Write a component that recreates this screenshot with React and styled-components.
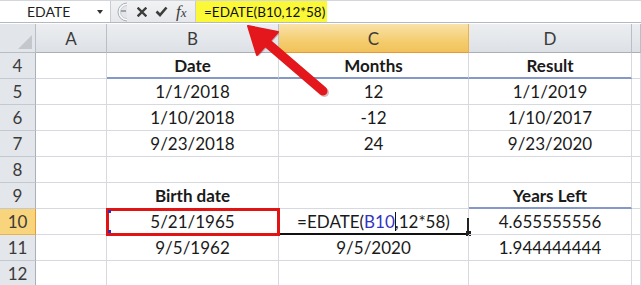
import React from "react";
import styled, { createGlobalStyle, css } from "styled-components";

const GlobalStyle = createGlobalStyle`
  html, body {
    margin: 0;
    padding: 0;
    background: #ffffff;
    overflow: hidden;
  }
  body {
    font-family: Lato, "Open Sans", sans-serif;
  }
`;

const Frame = styled.div`
  position: relative;
  width: 641px;
  height: 285px;
  overflow: hidden;
  background: #ffffff;
`;

const FormulaBar = styled.div`
  display: flex;
  height: 23px;
  border-top: 1px solid #d3d6da;
  border-bottom: 1px solid #b4b9c0;
  box-sizing: border-box;
  background: #ffffff;
`;

const NameBox = styled.div`
  width: 111px;
  display: flex;
  align-items: center;
  justify-content: space-between;
  padding: 0 7px 0 27px;
  box-sizing: border-box;
  font-size: 14px;
  color: #1e1e1e;
  border-right: 1px solid #c9cdd2;
`;

const DropArrow = styled.span`
  width: 0;
  height: 0;
  border-left: 3px solid transparent;
  border-right: 3px solid transparent;
  border-top: 4px solid #333;
`;

const ButtonStrip = styled.div`
  width: 85px;
  display: flex;
  align-items: center;
  padding-left: 1px;
  box-sizing: border-box;
  background: linear-gradient(#f1f2f4, #e6e8eb);
  border-right: 1px solid #c9cdd2;
`;

const StripIcon = styled.svg`
  flex: none;
  margin-left: ${(p) => p.$gap}px;
`;

const FxLabel = styled.span`
  margin-left: 8px;
  font-family: "Liberation Serif", serif;
  font-style: italic;
  font-size: 17px;
  color: #3a3a3a;
  line-height: 1;
`;

const FxSub = styled.span`
  font-size: 13px;
`;

const FormulaInput = styled.div`
  flex: 1;
  display: flex;
  align-items: stretch;
`;

const Highlight = styled.span`
  display: flex;
  align-items: center;
  padding: 0 0 0 8px;
  background: #fbf937;
  font-size: 13.5px;
  color: #111;
  width: 131px;
  box-sizing: border-box;
  white-space: nowrap;
`;

const Sheet = styled.div`
  display: grid;
  grid-template-columns: 36px 71px 172px 190px 163px 9px;
  grid-template-rows: 29px repeat(9, 26px);
  border-top: 1px solid #ffffff;
`;

const headFace = css`
  display: flex;
  align-items: center;
  justify-content: center;
  box-sizing: border-box;
  font-size: 17px;
  color: #3b3b3b;
`;

const Corner = styled.div`
  ${headFace};
  position: relative;
  background: #e2e5e9;
  border-right: 1px solid #b8bec6;
  border-bottom: 1px solid #b8bec6;
`;

const CornerMark = styled.svg`
  position: absolute;
  right: 3px;
  bottom: 3px;
`;

const ColHead = styled.div`
  ${headFace};
  background: ${(p) =>
    p.active
      ? "linear-gradient(#f9e2a9, #f4cd6f 60%, #f1c25a)"
      : "linear-gradient(#eceef1, #dde1e6)"};
  border-right: 1px solid ${(p) => (p.active ? "#e8b24e" : "#b9bfc7")};
  border-bottom: 1px solid ${(p) => (p.active ? "#e59a35" : "#a9b0ba")};
`;

const RowHead = styled.div`
  ${headFace};
  background: ${(p) => (p.active ? "#f8d47c" : "#e3e6ea")};
  border-right: 1px solid ${(p) => (p.active ? "#e59a35" : "#a9b0ba")};
  border-bottom: 1px solid ${(p) => (p.active ? "#e8b24e" : "#c4c9d0")};
`;

const Cell = styled.div`
  position: relative;
  display: flex;
  align-items: center;
  justify-content: center;
  box-sizing: border-box;
  font-size: 17px;
  font-weight: ${(p) => (p.bold ? 700 : 400)};
  color: #1a1a1a;
  white-space: nowrap;
  border-right: 1px solid #d6dae0;
  border-bottom: ${(p) =>
    p.blueLine ? "2px solid #8598c6" : p.active ? "2px solid #111" : "1px solid #d6dae0"};
  ${(p) =>
    p.marked &&
    css`
      outline: 3px solid #e11414;
      outline-offset: -2px;
      z-index: 2;
    `}
  ${(p) =>
    p.active &&
    css`
      &::after {
        content: "";
        position: absolute;
        right: -1px;
        top: 9px;
        bottom: -2px;
        width: 2px;
        background: #222;
      }
      &::before {
        content: "";
        position: absolute;
        right: -3px;
        bottom: -3px;
        width: 5px;
        height: 5px;
        background: #222;
      }
    `}
`;

const RefText = styled.span`
  color: #3434c2;
`;

const Caret = styled.span`
  display: inline-block;
  width: 1px;
  height: 19px;
  background: #111;
  vertical-align: middle;
  margin: 0 -1px 0 0;
`;

const RefCorner = styled.span`
  position: absolute;
  left: 1px;
  width: 3px;
  height: 3px;
  background: #2d2dbd;
  top: ${(p) => (p.bottom ? "auto" : "1px")};
  bottom: ${(p) => (p.bottom ? "1px" : "auto")};
`;

const ArrowLayer = styled.svg`
  position: absolute;
  left: 0;
  top: 0;
  pointer-events: none;
  z-index: 5;
`;

const columns = ["A", "B", "C", "D", ""];

const rows = [
  { n: 4, cells: ["", "Date", "Months", "Result"], bold: true, blue: [1, 2, 3] },
  { n: 5, cells: ["", "1/1/2018", "12", "1/1/2019"] },
  { n: 6, cells: ["", "1/10/2018", "-12", "1/10/2017"] },
  { n: 7, cells: ["", "9/23/2018", "24", "9/23/2020"] },
  { n: 8, cells: ["", "", "", ""] },
  { n: 9, cells: ["", "Birth date", "", "Years Left"], bold: true, blue: [3] },
  { n: 10, cells: ["", "5/21/1965", "formula", "4.655555556"], active: true },
  { n: 11, cells: ["", "9/5/1962", "9/5/2020", "1.944444444"] },
  { n: 12, cells: ["", "", "", ""] },
];

function Knob() {
  return (
    <svg width="16" height="20" viewBox="0 0 16 20">
      <path d="M15 1 A9 9 0 0 0 15 19" fill="#f6f7f8" stroke="#a9aeb5" strokeWidth="1" />
      <path d="M15 3.5 A6.5 6.5 0 0 0 15 16.5" fill="#e3e5e8" stroke="#c8ccd1" strokeWidth="1" />
      <rect x="9" y="8" width="5" height="2" fill="#9ea3aa" />
    </svg>
  );
}

function FormulaCell() {
  return (
    <>
      =EDATE(<RefText>B10</RefText>
      <Caret />
      ,12*58)
    </>
  );
}

export default function App() {
  return (
    <Frame>
      <GlobalStyle />
      <FormulaBar>
        <NameBox>
          EDATE
          <DropArrow />
        </NameBox>
        <ButtonStrip>
          <Knob />
          <StripIcon $gap={9} width="10" height="10" viewBox="0 0 10 10">
            <path d="M1.5 1.5 L8.5 8.5 M8.5 1.5 L1.5 8.5" stroke="#3c3c3c" strokeWidth="2.4" strokeLinecap="square" />
          </StripIcon>
          <StripIcon $gap={8} width="13" height="11" viewBox="0 0 13 11">
            <path d="M1.5 5.5 L5 9 L11.5 1.5" fill="none" stroke="#3c3c3c" strokeWidth="2.6" />
          </StripIcon>
          <FxLabel>
            f<FxSub>x</FxSub>
          </FxLabel>
        </ButtonStrip>
        <FormulaInput>
          <Highlight>=EDATE(B10,12*58)</Highlight>
        </FormulaInput>
      </FormulaBar>

      <Sheet>
        <Corner>
          <CornerMark width="14" height="14" viewBox="0 0 14 14">
            <polygon points="14,0 14,14 0,14" fill="#c4c8cd" />
          </CornerMark>
        </Corner>
        {columns.map((c, i) => (
          <ColHead key={i} active={c === "C"}>
            {c}
          </ColHead>
        ))}

        {rows.map((r) => (
          <React.Fragment key={r.n}>
            <RowHead active={r.active}>{r.n}</RowHead>
            {r.cells.map((v, i) => (
              <Cell
                key={i}
                bold={r.bold}
                blueLine={r.blue && r.blue.includes(i)}
                marked={r.active && i === 1}
                active={r.active && i === 2}
              >
                {r.active && i === 1 && (
                  <>
                    <RefCorner />
                    <RefCorner bottom />
                  </>
                )}
                {v === "formula" ? <FormulaCell /> : v}
              </Cell>
            ))}
            <Cell />
          </React.Fragment>
        ))}
      </Sheet>

      <ArrowLayer width="641" height="285" viewBox="0 0 641 285">
        <g transform="translate(1.5,1.5)" opacity="0.25">
          <line x1="266" y1="42" x2="323" y2="91" stroke="#600" strokeWidth="9" strokeLinecap="round" />
          <polygon points="248,26 278,32 257,55" fill="#600" />
        </g>
        <line x1="266" y1="42" x2="323" y2="91" stroke="#e3171c" strokeWidth="9" strokeLinecap="round" />
        <polygon points="248,26 278,32 257,55" fill="#e3171c" strokeLinejoin="round" stroke="#e3171c" strokeWidth="2" />
      </ArrowLayer>
    </Frame>
  );
}
